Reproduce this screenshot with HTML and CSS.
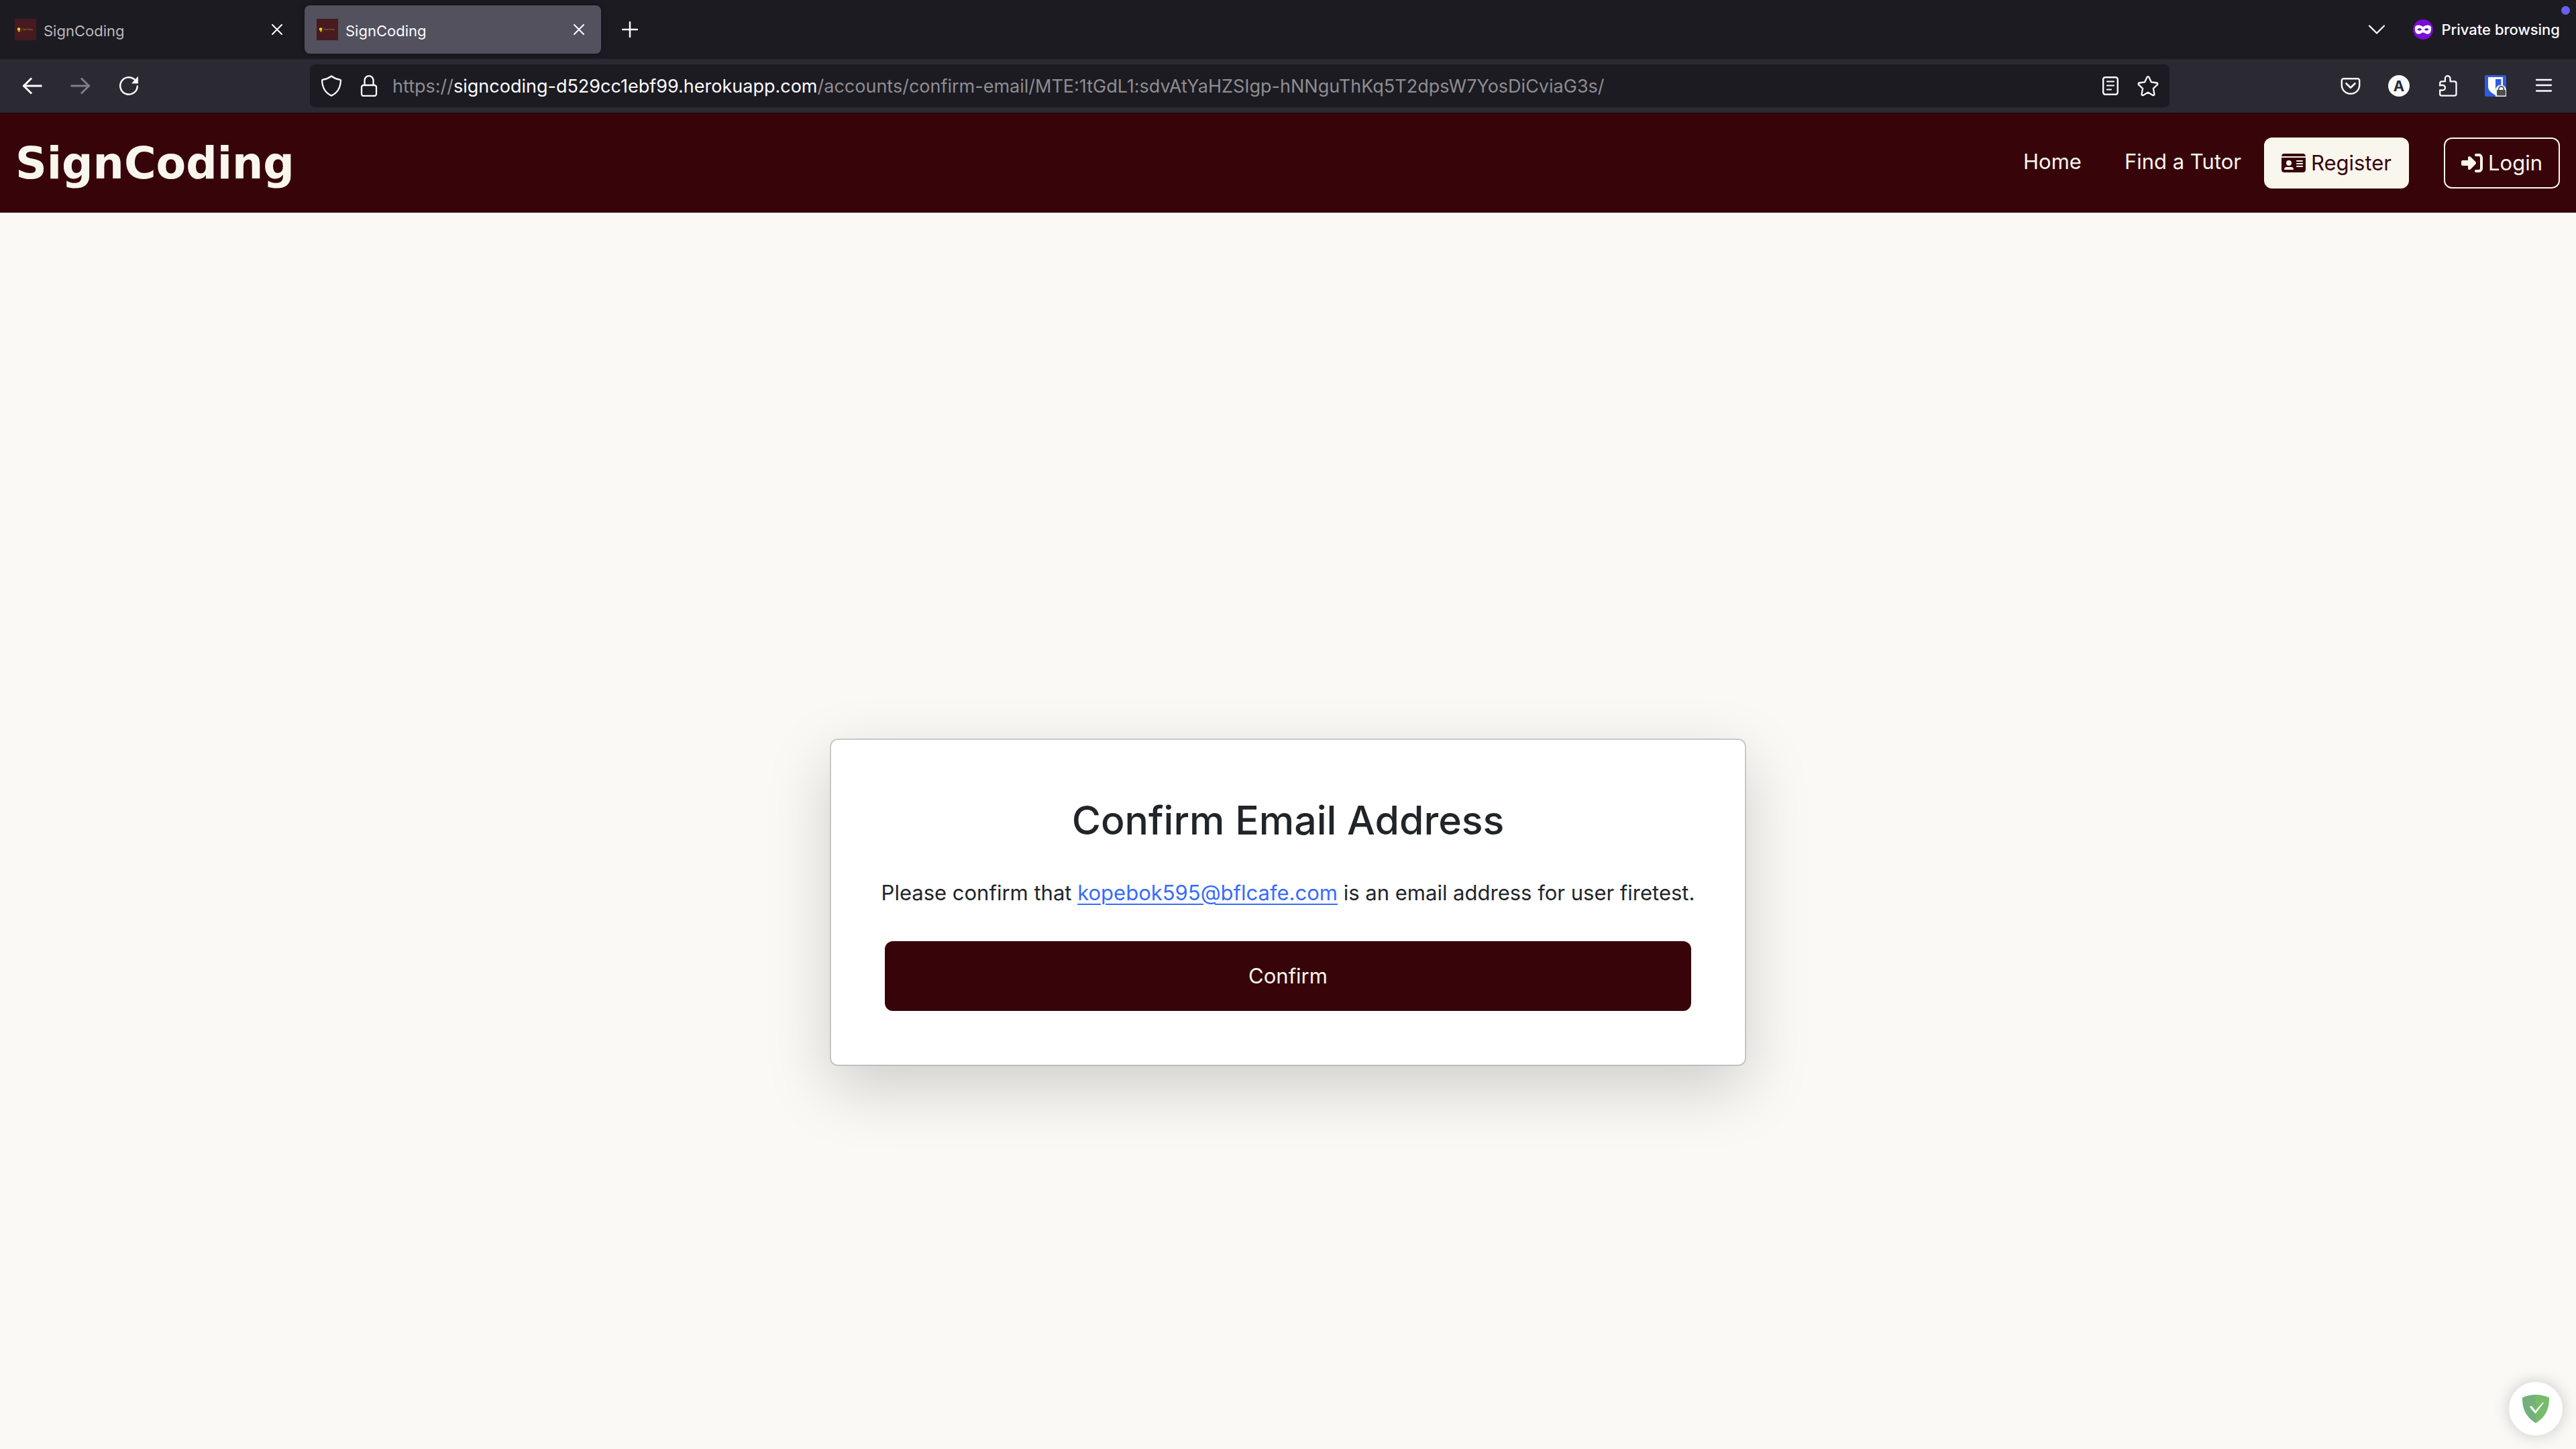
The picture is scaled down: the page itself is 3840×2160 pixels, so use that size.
FILE: index.html
```html
<!DOCTYPE html>
<html lang="en">
<head>
<meta charset="utf-8">
<meta name="viewport" content="width=device-width, initial-scale=1">
<title>SignCoding</title>
<link rel="stylesheet" href="styles.css">
</head>
<body>
<header class="browser">
  <div class="tabbar">
    <div class="tab">
      <svg width="32" height="32" viewBox="0 0 32 32" aria-hidden="true">
        <rect width="32" height="32" fill="#461a1f"/>
        <circle cx="6" cy="15.500" r="2.200" fill="#f0e02a"/>
        <path d="M4.500 16h3v3.500h-2z" fill="#c9b92a"/>
        <path d="M9.500 12.500v7" stroke="#6d5527" stroke-width=".6"/>
        <text x="11" y="17" class="favicon-text">SignCoding</text>
      </svg>
      <span class="tab-title">SignCoding</span>
      <button class="tab-close" type="button" aria-label="Close tab"><svg width="16" height="16" viewBox="0 0 16 16"><path d="M1 1l14 14M15 1L1 15" fill="none" stroke="currentColor" stroke-width="2" stroke-linecap="round"/></svg></button>
    </div>
    <div class="tab tab-active">
      <svg width="32" height="32" viewBox="0 0 32 32" aria-hidden="true">
        <rect width="32" height="32" fill="#461a1f"/>
        <circle cx="6" cy="15.500" r="2.200" fill="#f0e02a"/>
        <path d="M4.500 16h3v3.500h-2z" fill="#c9b92a"/>
        <path d="M9.500 12.500v7" stroke="#6d5527" stroke-width=".6"/>
        <text x="11" y="17" class="favicon-text">SignCoding</text>
      </svg>
      <span class="tab-title">SignCoding</span>
      <button class="tab-close" type="button" aria-label="Close tab"><svg width="16" height="16" viewBox="0 0 16 16"><path d="M1 1l14 14M15 1L1 15" fill="none" stroke="currentColor" stroke-width="2" stroke-linecap="round"/></svg></button>
    </div>
    <button class="new-tab" type="button" aria-label="New tab">
      <svg width="24" height="24" viewBox="0 0 24 24"><path d="M12 1v22M1 12h22" fill="none" stroke="currentColor" stroke-width="2.500" stroke-linecap="round"/></svg>
    </button>
    <div class="window-info">
      <button class="list-tabs" type="button" aria-label="List all tabs">
        <svg width="24" height="14" viewBox="0 0 24 14"><path d="M1 1.500l11 11 11-11" fill="none" stroke="currentColor" stroke-width="2.300" stroke-linecap="round" stroke-linejoin="round"/></svg>
      </button>
      <svg width="30" height="30" viewBox="0 0 30 30" aria-hidden="true">
        <circle cx="15" cy="15" r="15" fill="#7a0bd8"/>
        <path fill="#fff" fill-rule="evenodd" d="M15 11c2-1.600 4-2.600 7-2.600 3.500 0 5.200 1.600 5.200 4.600 0 5-1.700 8.800-5.500 8.800-3 0-4.200-2.300-6.700-2.300s-3.700 2.300-6.700 2.300c-3.800 0-5.500-3.800-5.500-8.800 0-3 1.700-4.600 5.200-4.600 3 0 5 1 7 2.600zM6.500 15c1 1.200 2 1.700 3.400 1.700s2.400-.6 3-1.700c-.8-1.200-1.800-1.900-3.200-1.900S7.300 13.800 6.500 15zm17 0c-.8-1.200-1.800-1.900-3.200-1.900s-2.400.7-3.200 1.900c.6 1.100 1.600 1.700 3 1.700s2.400-.5 3.400-1.700z"/>
      </svg>
      <span class="private-label">Private browsing</span>
      <span class="notice-dot"></span>
    </div>
  </div>

  <div class="toolbar">
    <button class="tool" type="button" aria-label="Back">
      <svg width="32" height="32" viewBox="0 0 32 32"><path d="M29 16H3.500M14 5.500L3.500 16 14 26.500" fill="none" stroke="currentColor" stroke-width="3" stroke-linecap="square" stroke-linejoin="round"/></svg>
    </button>
    <button class="tool" type="button" aria-label="Forward" disabled>
      <svg width="32" height="32" viewBox="0 0 32 32"><path d="M3 16h25.500M18 5.500L28.500 16 18 26.500" fill="none" stroke="currentColor" stroke-width="3" stroke-linecap="square" stroke-linejoin="round"/></svg>
    </button>
    <button class="tool" type="button" aria-label="Reload">
      <svg width="32" height="32" viewBox="0 0 32 32"><path d="M28.800 16.500A12.800 12.800 0 1 1 24.500 6.400" fill="none" stroke="currentColor" stroke-width="2.500" stroke-linecap="round"/><path d="M30 3v9a.5.5 0 0 1-.5.5h-8.300c-.6 0-.9-.7-.5-1.100L29 2.500c.4-.4 1-.1 1 .5z" fill="currentColor"/></svg>
    </button>
    <div class="urlbar">
      <button class="url-tool" type="button" aria-label="Tracking protection">
        <svg width="32" height="32" viewBox="0 0 32 32"><path d="M16 1.500c4 3 8 4.500 12.500 5.200 1 .2 1.500.8 1.400 1.800C29.300 19 24 27 16 30.600 8 27 2.700 19 2.100 8.500 2 7.500 2.500 6.900 3.500 6.700 8 6 12 4.500 16 1.500z" fill="none" stroke="currentColor" stroke-width="2.300" stroke-linejoin="round"/></svg>
      </button>
      <button class="url-tool" type="button" aria-label="Site information">
        <svg width="32" height="32" viewBox="0 0 32 32"><rect x="5" y="15" width="22" height="16" rx="3" fill="none" stroke="currentColor" stroke-width="2.300"/><path d="M9.500 15V7.700a6.500 6.500 0 0 1 13 0V15" fill="none" stroke="currentColor" stroke-width="2.300"/></svg>
      </button>
      <div class="url-text" role="textbox" contenteditable="true" spellcheck="false" aria-label="Address">https://<span class="url-host">signcoding-d529cc1ebf99.herokuapp.com</span>/accounts/confirm-email/MTE:1tGdL1:sdvAtYaHZSIgp-hNNguThKq5T2dpsW7YosDiCviaG3s/</div>
      <button class="url-tool" type="button" aria-label="Reader view">
        <svg width="32" height="32" viewBox="0 0 32 32"><rect x="5.200" y="3.200" width="21.600" height="25.600" rx="3" fill="none" stroke="currentColor" stroke-width="2.400"/><path d="M11 9.500h10M11 15.500h10M11 21.500h6" stroke="currentColor" stroke-width="2.200" stroke-linecap="round"/></svg>
      </button>
      <button class="url-tool" type="button" aria-label="Bookmark this page">
        <svg width="32" height="32" viewBox="0 0 32 32"><path d="M14.600 3c.6-1.300 2.200-1.300 2.800 0l3.500 7.400 8 1.100c1.400.2 2 1.800.9 2.800l-5.900 5.500 1.500 8.500c.2 1.300-1 2.200-2.200 1.600L16 25.800l-7.200 4.100c-1.200.6-2.400-.3-2.200-1.600l1.500-8.500-5.900-5.500c-1.100-1-.5-2.600.9-2.800l8-1.100z" fill="none" stroke="currentColor" stroke-width="2.300" stroke-linejoin="round"/></svg>
      </button>
    </div>
    <button class="tool" type="button" aria-label="Save to Pocket">
      <svg width="32" height="32" viewBox="0 0 32 32"><path d="M5.500 5.200h21a2.700 2.700 0 0 1 2.700 2.700V15a13.200 12.800 0 0 1-26.400 0V7.900a2.700 2.700 0 0 1 2.700-2.700z" fill="none" stroke="currentColor" stroke-width="2.400"/><path d="M9.500 12.500l6.500 6.300 6.500-6.300" fill="none" stroke="currentColor" stroke-width="2.600" stroke-linecap="round" stroke-linejoin="round"/></svg>
    </button>
    <button class="tool" type="button" aria-label="Account"><span class="avatar">A</span></button>
    <button class="tool" type="button" aria-label="Extensions">
      <svg width="32" height="32" viewBox="0 0 32 32"><path d="M5.200 16.500V12a2.700 2.700 0 0 1 2.700-2.700h5V5a3.800 3.800 0 0 1 7.600 0v4.300h6.300a2.700 2.700 0 0 1 2.700 2.700v16a2.700 2.700 0 0 1-2.700 2.700H7.900A2.700 2.700 0 0 1 5.200 28v-5.500h4a3 3 0 0 0 0-7.500h-4" fill="none" stroke="currentColor" stroke-width="2.300" stroke-linejoin="round"/></svg>
    </button>
    <button class="tool" type="button" aria-label="Bitwarden">
      <svg width="32" height="32" viewBox="0 0 32 32"><rect width="32" height="32" rx="2" fill="#315adf"/><path d="M5 3h22v14c0 6-5 9.500-11 13C10 26.500 5 23 5 17z" fill="#fff"/><path d="M16 6h8.500v11c0 4.500-3.500 7-8.500 10z" fill="#315adf"/><path d="M16 32V23a8 8 0 0 1 16-1v9a1 1 0 0 1-1 1z" fill="#f4f4f6"/><rect x="18" y="22" width="13" height="8.500" rx="1" fill="#4c4c4c"/><path d="M20.700 22v-1.300a3.800 3.800 0 0 1 7.600 0V22" fill="none" stroke="#4c4c4c" stroke-width="1.700"/></svg>
    </button>
    <button class="tool" type="button" aria-label="Menu">
      <svg width="32" height="32" viewBox="0 0 32 32"><path d="M5 7h22M5 15h22M5 23.500h22" stroke="currentColor" stroke-width="2.300" stroke-linecap="round"/></svg>
    </button>
  </div>
</header>

<nav class="navbar">
  <a class="brand" href="#">SignCoding</a>
  <div class="nav-links">
    <a class="nav-link" href="#">Home</a>
    <a class="nav-link" href="#">Find a Tutor</a>
  </div>
  <div class="nav-actions">
    <a class="btn btn-register" href="#">
      <svg width="36" height="32" viewBox="0 0 576 512" fill="currentColor" aria-hidden="true"><path d="M0 96l576 0c0-35.300-28.700-64-64-64H64C28.700 32 0 60.700 0 96zm0 32V416c0 35.300 28.700 64 64 64H512c35.300 0 64-28.700 64-64V128H0zM64 405.300c0-29.500 23.900-53.300 53.300-53.300H234.700c29.500 0 53.300 23.900 53.300 53.300c0 5.900-4.800 10.700-10.700 10.700H74.700c-5.900 0-10.700-4.800-10.700-10.700zM176 192a64 64 0 1 1 0 128 64 64 0 1 1 0-128zm176 16c0-8.800 7.200-16 16-16H496c8.800 0 16 7.200 16 16s-7.200 16-16 16H368c-8.800 0-16-7.200-16-16zm0 64c0-8.800 7.200-16 16-16H496c8.800 0 16 7.200 16 16s-7.200 16-16 16H368c-8.800 0-16-7.200-16-16zm0 64c0-8.800 7.200-16 16-16H496c8.800 0 16 7.200 16 16s-7.200 16-16 16H368c-8.800 0-16-7.200-16-16z"/></svg>
      Register
    </a>
    <a class="btn btn-login" href="#">
      <svg width="32" height="32" viewBox="0 0 512 512" fill="currentColor" aria-hidden="true"><path d="M217.900 105.900L340.700 228.700c7.200 7.200 11.300 17.100 11.300 27.300s-4.100 20.100-11.300 27.300L217.900 406.100c-6.400 6.400-15 9.900-24 9.900c-18.700 0-33.900-15.200-33.900-33.900l0-62.100L32 320c-17.700 0-32-14.300-32-32l0-64c0-17.700 14.300-32 32-32l128 0 0-62.100c0-18.700 15.200-33.900 33.900-33.900c9 0 17.600 3.600 24 9.900zM352 416l64 0c17.700 0 32-14.300 32-32l0-256c0-17.700-14.300-32-32-32l-64 0c-17.700 0-32-14.300-32-32s14.300-32 32-32l64 0c53 0 96 43 96 96l0 256c0 53-43 96-96 96l-64 0c-17.700 0-32-14.300-32-32s14.300-32 32-32z"/></svg>
      Login
    </a>
  </div>
</nav>

<main class="page">
  <form class="card">
    <h1 class="card-title">Confirm Email Address</h1>
    <p class="card-text">Please confirm that <a class="mail-link" href="mailto:kopebok595@bflcafe.com">kopebok595@bflcafe.com</a> is an email address for user firetest.</p>
    <button class="confirm" type="button">Confirm</button>
  </form>
</main>

<button class="guard" type="button" aria-label="AdGuard">
  <svg width="40" height="44" viewBox="0 0 40 44"><path d="M20 1C13 1 6 2.500 0 5.500c0 16 4 27.500 20 38z" fill="#74b07c"/><path d="M20 1c7 0 14 1.500 20 4.500 0 16-4 27.500-20 38z" fill="#78bb6c"/><path d="M11 19.500c1.300-2 3-2 4.300-.2l4.200 5.700L30.300 12.800c.6-.6 1.500-.2 1.300.7L19.500 29.500z" fill="#fff"/></svg>
</button>
</body>
</html>
```
FILE: styles.css
```css
*, *::before, *::after { box-sizing: border-box; }

body {
  margin: 0;
  min-height: 100vh;
  display: flex;
  flex-direction: column;
  background: #faf9f5;
  color: #212529;
  font: 400 31px/48px Inter, "Liberation Sans", sans-serif;
}

button {
  border: 0;
  padding: 0;
  background: none;
  color: inherit;
  font: inherit;
}

svg { display: block; flex: none; }
a { color: inherit; text-decoration: none; }

.favicon-text {
  fill: #a58f25;
  font: 3px "Liberation Sans", sans-serif;
}

/* Browser window */
.browser { color: #fbfbfe; border-bottom: 1px solid #0c0b0f; }

.tabbar {
  display: flex;
  align-items: center;
  gap: 8px;
  height: 88px;
  padding: 0 24px 0 4px;
  background: #1c1b22;
  font-size: 22px;
  line-height: 32px;
}

.tab {
  display: flex;
  align-items: center;
  gap: 10px;
  width: 442px;
  height: 72px;
  padding: 0 17px 0 18px;
  border-radius: 8px;
  color: #b9b9bd;
}

.tab-active {
  background: #53515e;
  color: #fbfbfe;
  box-shadow: 0 0 8px rgba(0, 0, 0, .4);
}

.tab-title { flex: 1; padding: 3px 0 0 1px; }

.tab-close {
  display: grid;
  place-items: center;
  width: 32px;
  height: 32px;
  color: #fbfbfe;
}

.new-tab {
  display: grid;
  place-items: center;
  width: 70px;
  height: 70px;
}

.window-info {
  position: relative;
  display: flex;
  align-items: center;
  gap: 12px;
  height: 48px;
  margin-left: auto;
}

.list-tabs { margin-right: 30px; }
.private-label { font-weight: 500; }

.notice-dot {
  position: absolute;
  top: -11px;
  right: -15px;
  width: 13px;
  height: 13px;
  border-radius: 50%;
  background: #6a5ff0;
}

.toolbar {
  display: flex;
  align-items: center;
  height: 80px;
  padding: 0 12px;
  background: #2b2a33;
}

.tool {
  display: grid;
  place-items: center;
  flex: none;
  width: 72px;
  height: 64px;
}

.tool:disabled { color: #807f85; }

.urlbar {
  display: flex;
  align-items: center;
  flex: 1;
  min-width: 0;
  height: 64px;
  margin: 0 234px;
  padding: 0 4px;
  border-radius: 8px;
  background: #1c1b22;
}

.url-tool {
  display: grid;
  place-items: center;
  flex: none;
  width: 56px;
  height: 64px;
}

.url-text {
  flex: 1;
  min-width: 0;
  padding: 2px 0 0 7px;
  overflow: hidden;
  white-space: nowrap;
  color: #8e8d92;
  font-size: 27px;
  line-height: 36px;
}

.url-host { color: #fbfbfe; }

.avatar {
  display: grid;
  place-items: center;
  width: 32px;
  height: 32px;
  border-radius: 50%;
  background: #fbfbfe;
  color: #2b2a33;
  font-weight: 700;
  font-size: 22px;
  line-height: 32px;
}

/* Site */
.navbar {
  display: flex;
  align-items: center;
  height: 148px;
  padding: 0 24px 0 23px;
  background: #370509;
  color: #f9f6ee;
}

.brand {
  padding-top: 2px;
  font: 700 65px/80px "DejaVu Sans", sans-serif;
}

.nav-links {
  display: flex;
  gap: 64px;
  margin: 0 34px 4px auto;
}

.nav-actions { display: flex; gap: 52px; }

.btn {
  display: flex;
  align-items: center;
  gap: 8px;
  height: 76px;
  padding: 0 24px;
  border: 2px solid #f9f6ee;
  border-radius: 12px;
}

.btn-register { background: #f9f6ee; color: #370509; }

.page {
  flex: 1;
  display: flex;
  align-items: center;
  justify-content: center;
  padding-top: 213px;
}

.card {
  display: flex;
  flex-direction: column;
  align-items: center;
  gap: 48px;
  width: 1366px;
  max-width: 100%;
  padding: 80px;
  border: 2px solid rgba(0, 0, 0, .175);
  border-radius: 12px;
  background: #fff;
  background-clip: padding-box;
  box-shadow: 0 32px 96px rgba(0, 0, 0, .175);
}

.card-title {
  margin: 0;
  padding-top: 4px;
  font-weight: 500;
  font-size: 59px;
  line-height: 72px;
}

.card-text { margin: 0; white-space: nowrap; }

.mail-link {
  color: #386bff;
  text-decoration: underline;
  text-decoration-thickness: 2px;
  text-underline-offset: 5px;
}

.confirm {
  width: 100%;
  height: 104px;
  border-radius: 12px;
  background: #370509;
  color: #f9f6ee;
}

.guard {
  position: fixed;
  right: 20px;
  bottom: 20px;
  display: grid;
  place-items: center;
  width: 80px;
  height: 80px;
  border-radius: 50%;
  background: #fff;
  box-shadow: 0 0 24px rgba(0, 0, 0, .2);
}
```
